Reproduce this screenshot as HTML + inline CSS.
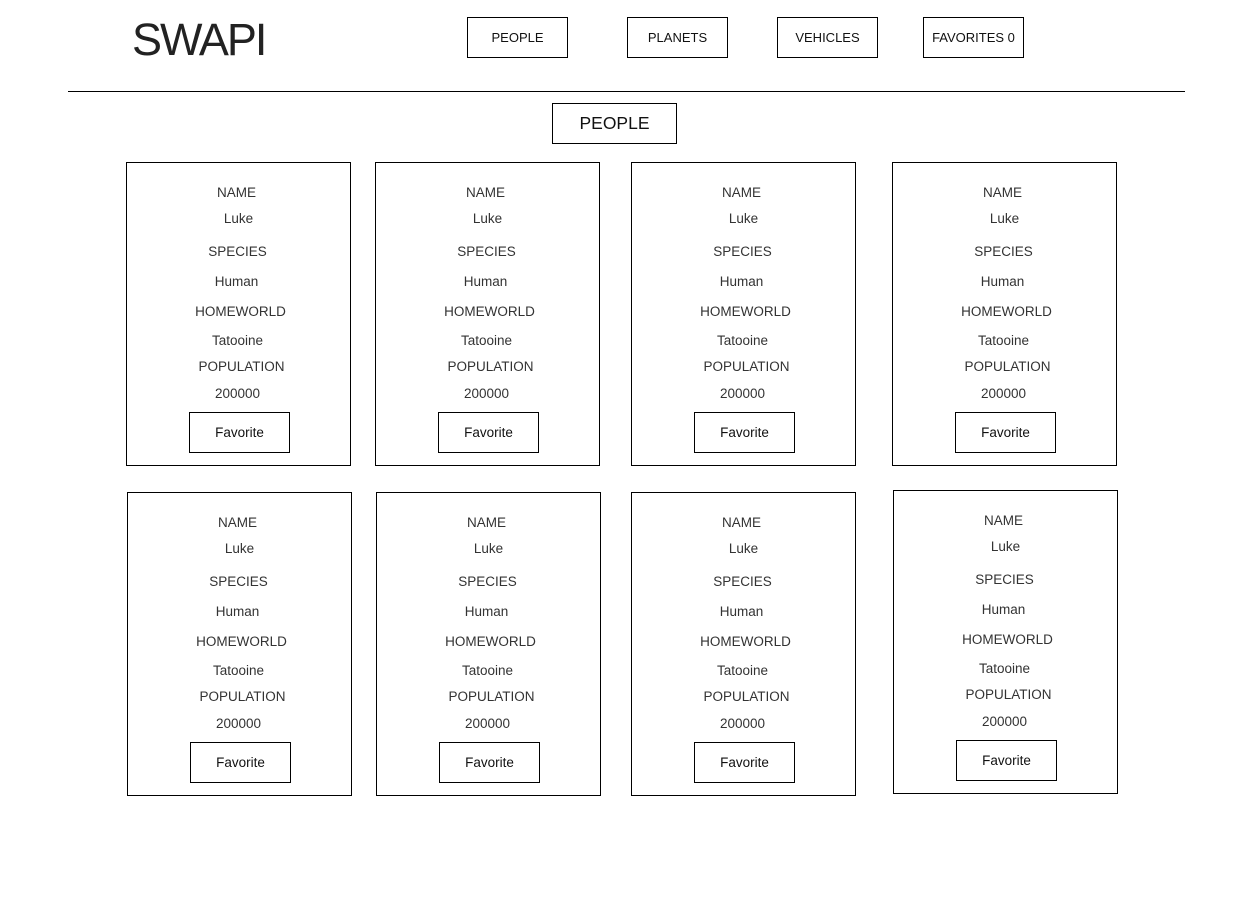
<!DOCTYPE html>
<html><head><meta charset="utf-8"><style>
*{box-sizing:border-box;margin:0;padding:0}
body{width:1236px;height:906px;background:#fff;position:relative;font-family:"Liberation Sans",sans-serif;overflow:hidden}
.abs{position:absolute}
.logo{left:132px;top:14px;font-size:45px;color:#222;letter-spacing:-2px;line-height:52px}
.nb{position:absolute;top:17px;width:101px;height:41px;border:1px solid #000;font-size:13px;color:#111;display:flex;align-items:center;justify-content:center}
.line{left:68px;top:91px;width:1117px;height:1px;background:#000}
.title{left:552px;top:103px;width:125px;height:41px;border:1px solid #000;font-size:17.5px;color:#111;display:flex;align-items:center;justify-content:center}
.card{position:absolute;width:225px;height:304px;border:1px solid #000;color:#333;font-size:13.5px}
.card .t{position:absolute;left:0;width:100%;text-align:center;line-height:16px}
.card .b{position:absolute;left:62px;top:249px;width:101px;height:41px;border:1px solid #000;color:#111;display:flex;align-items:center;justify-content:center;font-size:13.5px}
</style></head><body>
<div class="abs logo">SWAPI</div>
<div class="nb" style="left:467px">PEOPLE</div>
<div class="nb" style="left:627px">PLANETS</div>
<div class="nb" style="left:777px">VEHICLES</div>
<div class="nb" style="left:923px">FAVORITES 0</div>
<div class="abs line"></div>
<div class="abs title">PEOPLE</div>
<div id="cards"></div>
<script>
var pos=[[126,162],[375,162],[631,162],[892,162],[127,492],[376,492],[631,492],[893,490]];
var lines=[["NAME",22,-2],["Luke",48,0],["SPECIES",81,-1],["Human",111,-2],["HOMEWORLD",141,2],["Tatooine",170,-1],["POPULATION",196,3],["200000",223,-1]];
var h="";
pos.forEach(function(p){
h+='<div class="card" style="left:'+p[0]+'px;top:'+p[1]+'px">';
lines.forEach(function(l){h+='<div class="t" style="top:'+l[1]+'px;margin-left:'+l[2]+'px">'+l[0]+'</div>';});
h+='<div class="b">Favorite</div></div>';
});
document.getElementById("cards").innerHTML=h;
</script>
</body></html>
